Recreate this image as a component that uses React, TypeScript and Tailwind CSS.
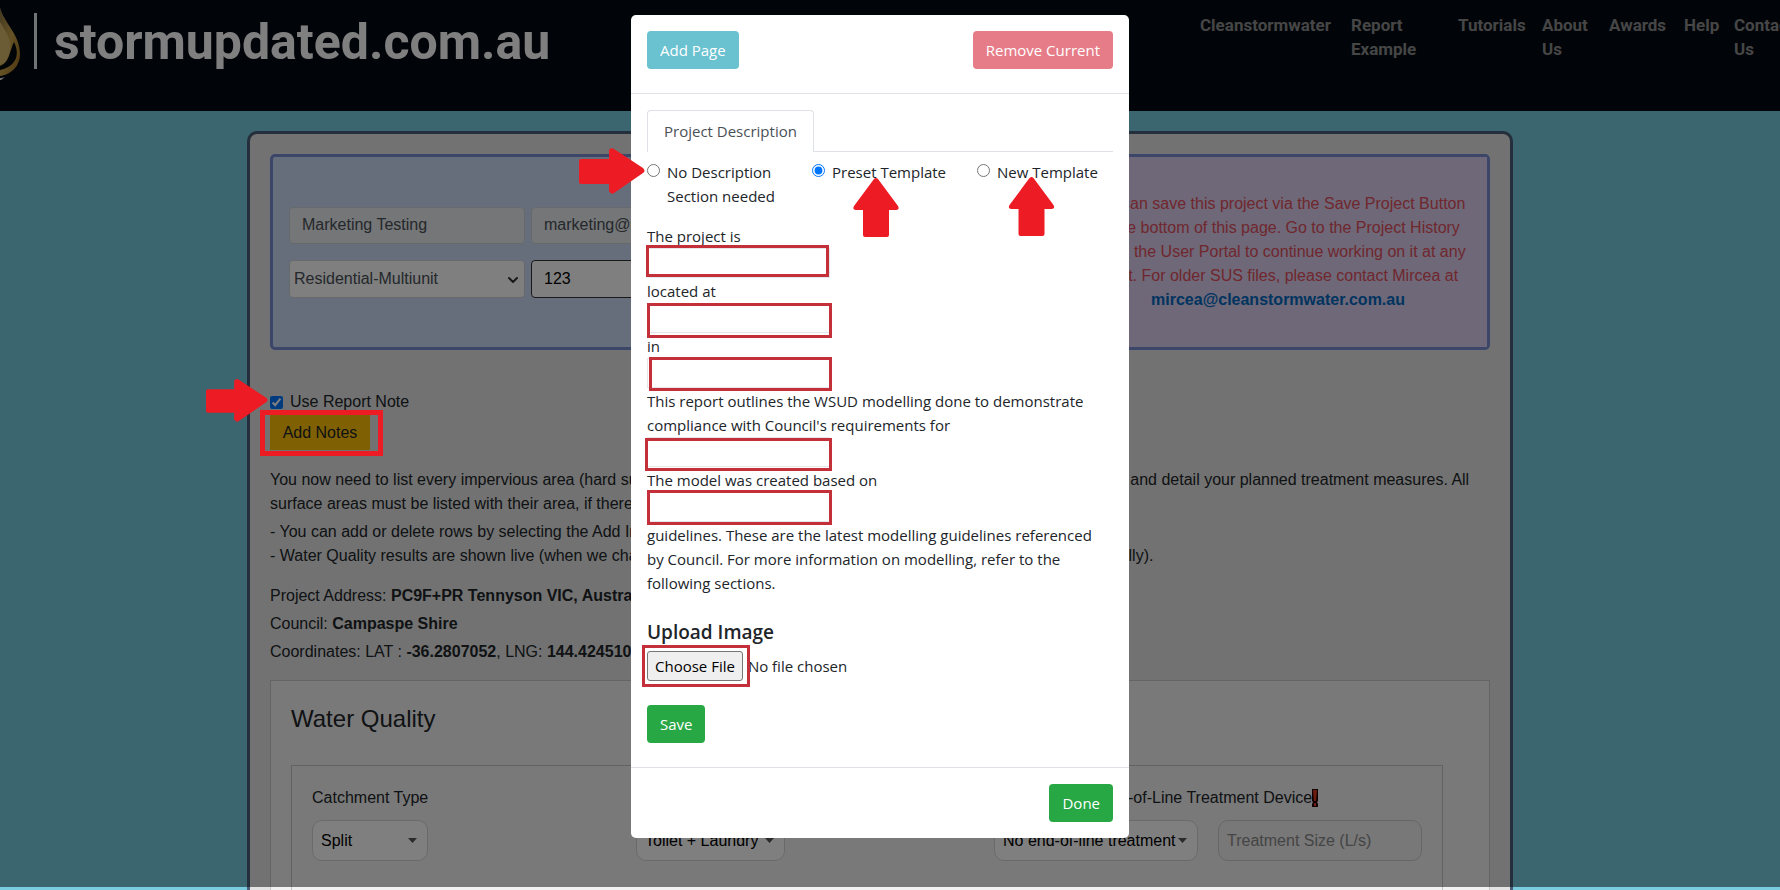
import type { ReactNode } from "react";
import { ChevronDown } from "lucide-react";

const navItems = [
  { label: "Cleanstormwater", width: "w-[135px]" },
  { label: "Report Example", width: "w-[91px]" },
  { label: "Tutorials", width: "w-[68px]" },
  { label: "About Us", width: "w-[51px]" },
  { label: "Awards", width: "w-[59px]" },
  { label: "Help", width: "w-[34px]" },
  { label: "Contact Us", width: "w-[60px]" },
];

function LogoDrop() {
  return (
    <svg className="h-20 w-[22px] shrink-0" viewBox="0 0 22 80" aria-hidden="true">
      <defs>
        <linearGradient id="gold" x1="0" y1="0" x2="1" y2="1">
          <stop offset="0" stopColor="#8a7444" />
          <stop offset="0.5" stopColor="#c9a44a" />
          <stop offset="1" stopColor="#9a6a1c" />
        </linearGradient>
      </defs>
      <path d="M0 7C3 22 20 34 20 54C20 67 10 75 0 76Z" fill="url(#gold)" />
      <path d="M14 42C20 54 17 66 0 70V66C10 62 9 52 14 42Z" fill="#050a10" />
      <path d="M0 22C6 32 12 40 10 50C8 60 4 64 0 65Z" fill="#d9b96a" />
      <path d="M0 78Q3 78 5 77L0 81Z" fill="#dddddd" />
    </svg>
  );
}

function ArrowRight({ className }: { className: string }) {
  return (
    <svg className={className} viewBox="0 0 66 47" preserveAspectRatio="none" aria-hidden="true">
      <path
        d="M2 12H30V3Q32 0 35 2L64 21Q67 24 64 26L35 46Q32 48 30 44V37H2Q0 37 0 35V14Q0 12 2 12Z"
        fill="#ed1c24"
      />
    </svg>
  );
}

function ArrowUp({ className }: { className: string }) {
  return (
    <svg className={className} viewBox="0 0 46 59" aria-hidden="true">
      <path
        d="M21 1Q23 -1 25 1L45 28Q47 32 43 32H36V57Q36 59 34 59H12Q10 59 10 57V32H3Q-1 32 1 28Z"
        fill="#ed1c24"
      />
    </svg>
  );
}

function FieldLine({ label, name, mark }: { label: string; name: string; mark: string }) {
  return (
    <>
      <label htmlFor={name} className="block">
        {label}
      </label>
      <div className="relative h-[31px] w-[183px]">
        <input id={name} type="text" className="block h-[30px] w-full border border-gray-200 bg-white px-1 outline-none" />
        <span className={`pointer-events-none absolute border-3 border-[#c4303a] ${mark}`} />
      </div>
    </>
  );
}

function PanelSelect({ id, value, width }: { id: string; value: string; width: string }) {
  return (
    <div className={`relative ${width}`}>
      <select
        id={id}
        className="h-[41px] w-full appearance-none rounded-[10px] border border-gray-300 bg-white pl-2 text-black"
      >
        <option>{value}</option>
      </select>
      <svg className="pointer-events-none absolute top-[18px] right-[11px] h-[5px] w-[9px]" viewBox="0 0 9 5" aria-hidden="true">
        <path d="M0 0H9L4.500 5Z" fill="#555555" />
      </svg>
    </div>
  );
}

function Choice({ id, checked, children }: { id: string; checked?: boolean; children: ReactNode }) {
  return (
    <div className="flex w-[165px] shrink-0 items-start gap-[7px]">
      <input id={id} type="radio" name="template" defaultChecked={checked} className="mt-1 size-[13px] shrink-0" />
      <label htmlFor={id} className="w-[120px]">
        {children}
      </label>
    </div>
  );
}

function Header() {
  return (
    <header className="flex h-[111px] items-start justify-between overflow-hidden bg-[#020a12]">
      <div className="flex items-start">
        <LogoDrop />
        <span className="mt-[13px] ml-3 h-14 w-[3px] bg-gray-200" />
        <span className="mt-3 ml-[17px] font-[Roboto,sans-serif] text-[50px] leading-[60px] font-bold text-white">
          stormupdated.com.au
        </span>
      </div>
      <nav className="-mr-[14px] flex gap-4 pt-[13px] font-[Roboto,sans-serif] text-[17px] leading-6 font-bold text-[#8d8d8d]">
        {navItems.map((item) => (
          <a key={item.label} href="#" className={`shrink-0 ${item.width}`}>
            {item.label}
          </a>
        ))}
      </nav>
    </header>
  );
}

function ProjectForm() {
  return (
    <section className="flex h-[196px] rounded-[5px] border-3 border-[#788cd0] bg-[#ccdcf8]">
      <div className="grid flex-1 content-center gap-x-[6px] gap-y-4 pl-4 [grid-template-columns:236px_236px]">
        <input aria-label="Name" defaultValue="Marketing Testing" className="h-[37px] rounded border border-[#ced4da] bg-[#e9ecef] px-3 text-[#495057]" />
        <input aria-label="Email" defaultValue="marketing@mail.com" className="h-[37px] rounded border border-[#ced4da] bg-[#e9ecef] px-3 text-[#495057]" />
        <div className="relative">
          <select aria-label="Project type" className="h-[38px] w-full appearance-none rounded border border-[#ced4da] bg-white pl-1 text-[#495057]">
            <option>Residential-Multiunit</option>
          </select>
          <ChevronDown className="pointer-events-none absolute top-3 right-1 size-4 text-[#333]" strokeWidth={3} />
        </div>
        <input aria-label="Project number" defaultValue="123" className="h-[38px] rounded border border-[#333] bg-white px-3 text-black" />
      </div>
      <div className="w-[418px] bg-[#dcd0f0] pt-[35px] text-center text-[#e04e5c]">
        <p>
          You can save this project via the Save Project Button
          <br />
          at the bottom of this page. Go to the Project History
          <br />
          tab in the User Portal to continue working on it at any
          <br />
          point. For older SUS files, please contact Mircea at
          <br />
          <a href="#" className="font-bold text-[#0068c0]">
            mircea@cleanstormwater.com.au
          </a>
        </p>
      </div>
    </section>
  );
}

function WaterQuality() {
  return (
    <section className="mt-4 h-[300px] border border-[#c8c8c8] bg-[#f2f2f2] px-5 pt-5">
      <h2 className="text-2xl leading-9">Water Quality</h2>
      <div className="mt-7 mr-[26px] h-[260px] border border-[#c4c4c4] px-5 pt-5">
        <div className="grid grid-cols-[324fr_358fr_224fr_204fr]">
          <div className="min-w-0">
            <label htmlFor="catchment" className="mb-[10px] block">
              Catchment Type
            </label>
            <PanelSelect id="catchment" value="Split" width="w-[116px]" />
          </div>
          <div className="min-w-0">
            <label htmlFor="reuse" className="mb-[10px] block">
              Reuse
            </label>
            <PanelSelect id="reuse" value="Toilet + Laundry" width="w-[149px]" />
          </div>
          <div className="min-w-0">
            <label htmlFor="device" className="mb-[10px] flex items-center whitespace-nowrap">
              Select Type of End-of-Line Treatment Device
              <svg className="h-[18px] w-[6px] shrink-0" viewBox="0 0 6 18" aria-hidden="true">
                <path d="M0 0H6V12L5 13L6 15V18H0V15L1 13L0 12Z" fill="#220000" />
                <path d="M1 1H5L4 12H2ZM2 14H4V17H2Z" fill="#d83a1c" />
              </svg>
            </label>
            <PanelSelect id="device" value="No end-of-line treatment" width="w-[204px]" />
          </div>
          <input
            aria-label="Treatment size"
            placeholder="Treatment Size (L/s)"
            className="mt-[34px] h-[41px] w-full min-w-0 rounded-[10px] border border-[#cccccc] bg-[#f0f0f0] px-2 placeholder:text-[#8a8a8a]"
          />
        </div>
      </div>
    </section>
  );
}

function ReportDialog() {
  return (
    <div className="fixed inset-0 z-40 flex items-start justify-center overflow-hidden pt-[15px] pr-5">
      <div
        role="dialog"
        aria-label="Report notes"
        className="relative w-[498px] rounded-[5px] bg-white font-['Open_Sans',sans-serif] text-[15px] leading-6 text-[#212529]"
      >
        <div className="flex justify-between border-b border-[#dee2e6] px-4 pt-4 pb-6">
          <button type="button" className="h-[38px] rounded bg-[#6ac1d0] px-[13px] text-white">
            Add Page
          </button>
          <button type="button" className="h-[38px] rounded bg-[#e67c87] px-[13px] text-white">
            Remove Current
          </button>
        </div>

        <div className="border-b border-[#dee2e6] px-4 pt-4 pb-6">
          <div className="flex border-b border-[#dee2e6]">
            <button
              type="button"
              className="-mb-px h-[42px] rounded-t border border-b-0 border-[#dee2e6] bg-white px-4 pb-[2px] text-[#495057]"
            >
              Project Description
            </button>
          </div>

          <div className="mt-2 flex">
            <Choice id="none">No Description Section needed</Choice>
            <Choice id="preset" checked>
              Preset Template
            </Choice>
            <Choice id="new">New Template</Choice>
          </div>

          <div className="mt-4 pr-4">
            <FieldLine label="The project is" name="kind" mark="-top-[3px] -left-px h-8 w-[183px]" />
            <FieldLine label="located at" name="address" mark="top-0 left-0 h-[35px] w-[185px]" />
            <FieldLine label="in" name="council" mark="-top-px left-[2px] h-[34px] w-[183px]" />
            <FieldLine
              label="This report outlines the WSUD modelling done to demonstrate compliance with Council's requirements for"
              name="requirements"
              mark="top-px -left-[2px] h-[33px] w-[187px]"
            />
            <FieldLine label="The model was created based on" name="guidelines" mark="-top-[2px] left-0 h-[35px] w-[185px]" />
            <p>
              guidelines. These are the latest modelling guidelines referenced by Council. For more information on
              modelling, refer to the following sections.
            </p>
          </div>

          <label htmlFor="image" className="mt-[25px] block text-[19px] leading-6 font-semibold">
            Upload Image
          </label>
          <div className="relative mt-[7px] h-[30px]">
            <input
              id="image"
              type="file"
              className="block h-[30px] w-full file:mr-[5px] file:h-[30px] file:rounded-[3px] file:border file:border-[#767676] file:bg-[#efefef] file:px-[7px] file:text-black"
            />
            <span className="pointer-events-none absolute -top-[6px] -left-[5px] h-[42px] w-[108px] border-3 border-[#c4303a]" />
          </div>

          <button type="button" className="mt-6 block h-[38px] rounded bg-[#28a745] px-[13px] text-white">
            Save
          </button>
        </div>

        <div className="flex justify-end p-4">
          <button type="button" className="h-[38px] rounded bg-[#28a745] px-[13px] text-white">
            Done
          </button>
        </div>

        <ArrowRight className="absolute top-[132px] -left-[52px] h-[47px] w-[66px]" />
        <ArrowUp className="absolute top-[163px] left-[222px] h-[59px] w-[46px]" />
        <ArrowUp className="absolute top-[162px] left-[377px] h-[59px] w-[47px]" />
      </div>
    </div>
  );
}

export default function App() {
  return (
    <div className="h-screen overflow-hidden bg-[#78ccde] font-['Liberation_Sans',Arial,sans-serif] text-base leading-6 text-[#212529]">
      <Header />
      <div className="pt-5 pr-5">
        <main className="mx-auto w-full max-w-[1266px] rounded-[10px] border-3 border-[#4a5c78] bg-[#e4e4e4] px-5 pt-5">
          <ProjectForm />

          <div className="mt-10 flex items-center gap-[7px]">
            <input id="note" type="checkbox" defaultChecked className="size-[13px]" />
            <label htmlFor="note">Use Report Note</label>
          </div>
          <div className="relative mt-px w-fit">
            <button type="button" className="block h-[35px] w-[100px] bg-[#ffc107]">
              Add Notes
            </button>
            <span className="pointer-events-none absolute -top-[5px] -left-[10px] z-40 h-[46px] w-[123px] border-5 border-[#ed1c24]" />
            <ArrowRight className="absolute -top-[37px] -left-[64px] z-40 h-[44px] w-[62px]" />
          </div>

          <p className="mt-[18px] whitespace-nowrap">
            You now need to list every impervious area (hard surfaces such as roofs, decks, driveways, paths and patios)
            on the site, and detail your planned treatment measures. All
            <br />
            surface areas must be listed with their area, if there are any.
          </p>
          <p className="mt-1">
            - You can add or delete rows by selecting the Add Impervious Area button.
            <br />- Water Quality results are shown live (when we change any input, then all the results are going to be
            updated automatically).
          </p>
          <div className="mt-4 space-y-1">
            <p>
              Project Address: <b>PC9F+PR Tennyson VIC, Australia</b>
            </p>
            <p>
              Council: <b>Campaspe Shire</b>
            </p>
            <p>
              Coordinates: LAT : <b>-36.2807052</b>, LNG: <b>144.4245107</b>
            </p>
          </div>

          <WaterQuality />
        </main>
      </div>

      <div className="fixed inset-x-0 top-0 bottom-[3px] z-30 bg-black/50" />
      <ReportDialog />
    </div>
  );
}
